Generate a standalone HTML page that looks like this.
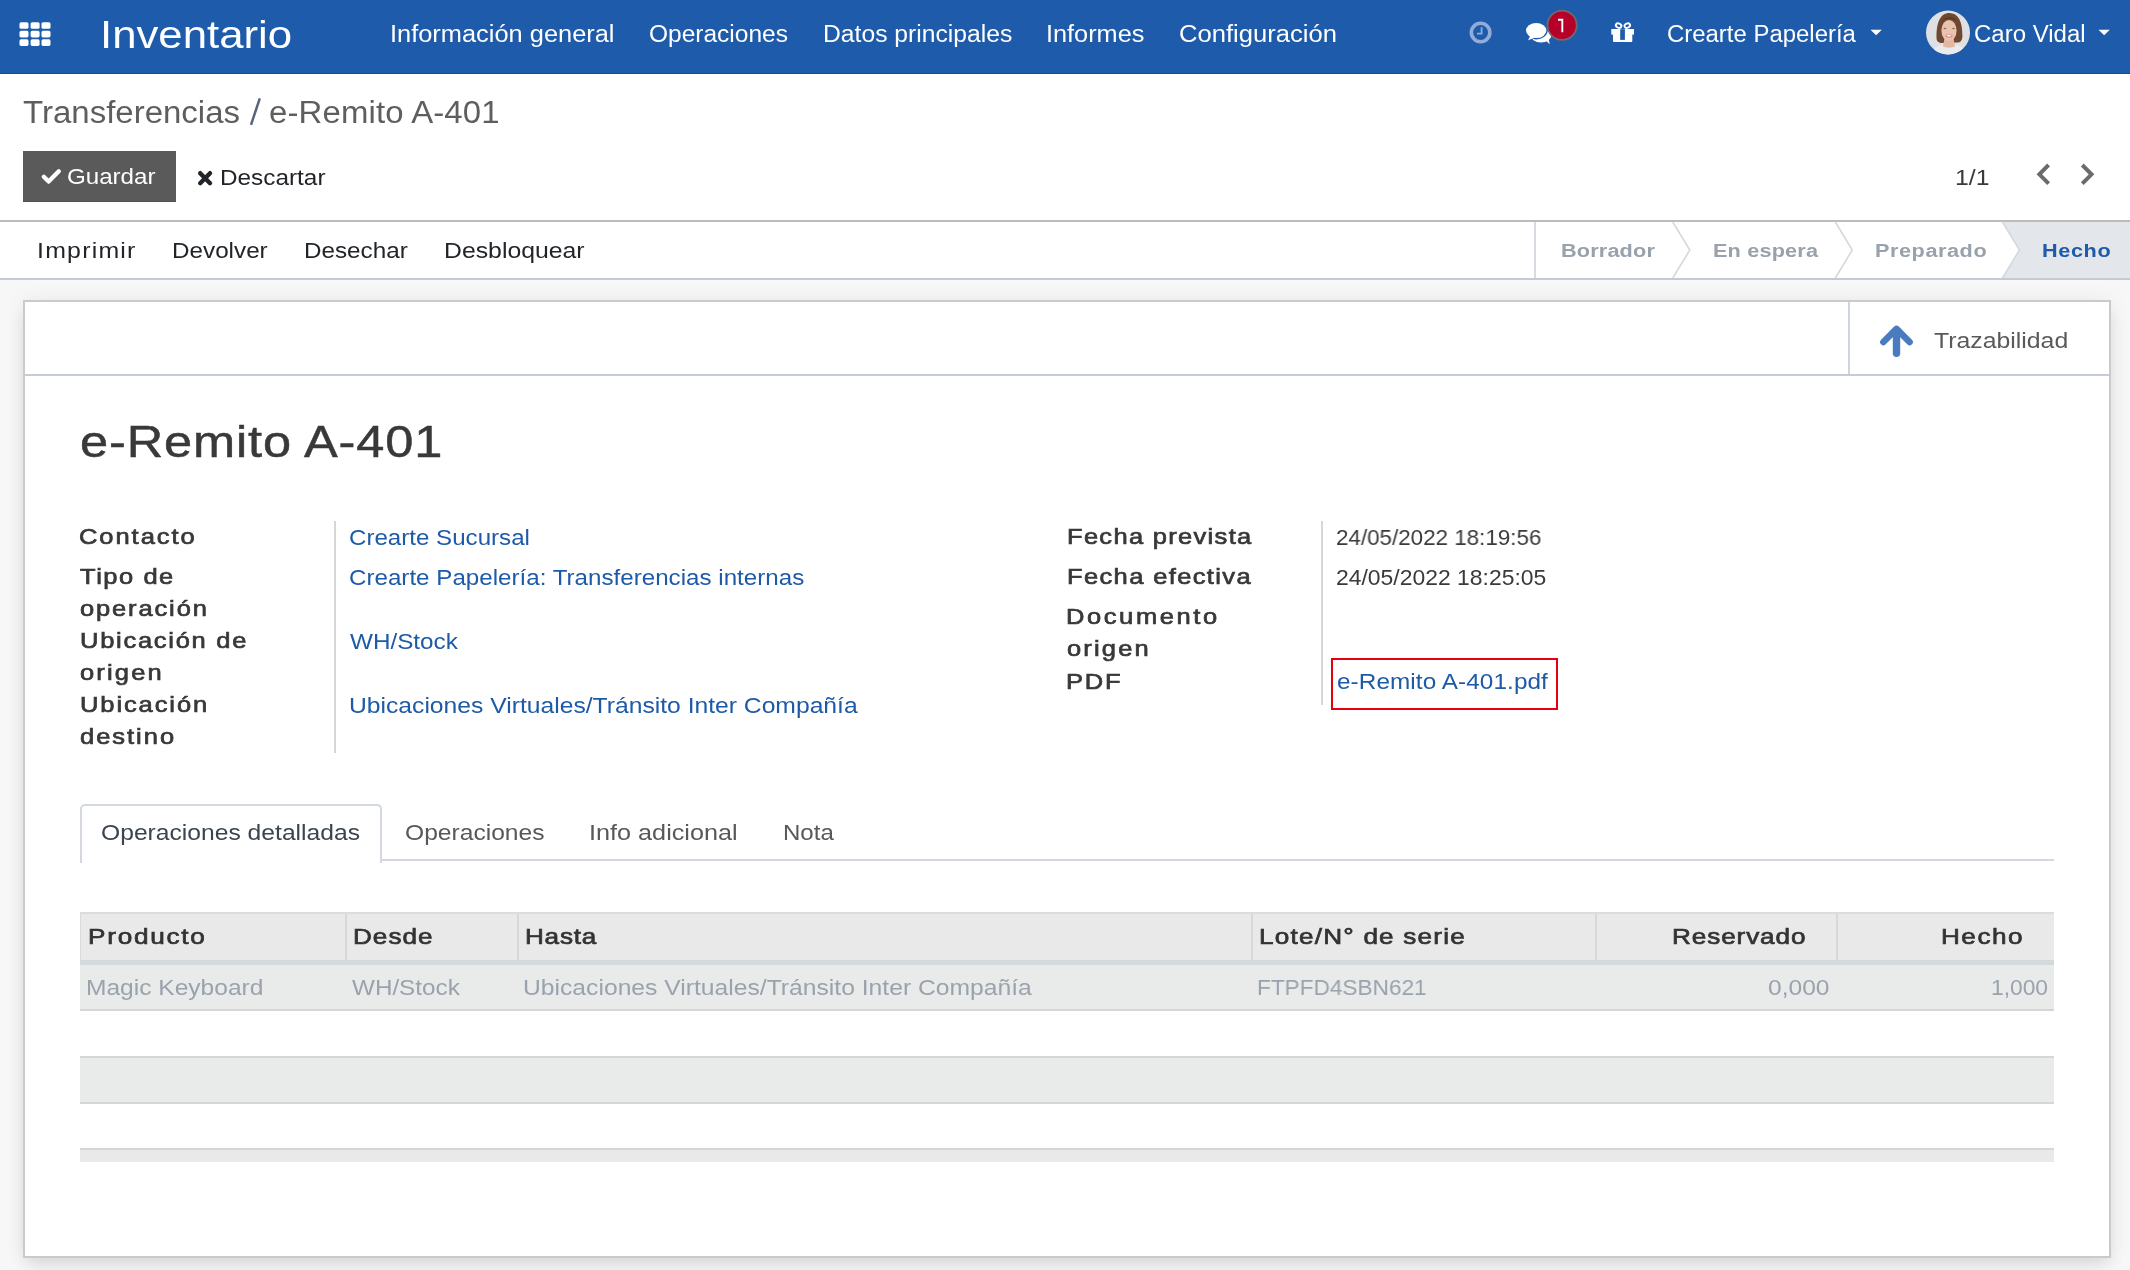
<!DOCTYPE html>
<html><head><meta charset="utf-8"><title>e-Remito A-401</title>
<style>
html,body{margin:0;padding:0;width:2130px;height:1270px;overflow:hidden;background:#f7f7f7;font-family:"Liberation Sans",sans-serif;}
.t{position:absolute;white-space:nowrap;line-height:1;will-change:transform;transform-origin:0 0;font-family:"Liberation Sans",sans-serif;}
.r{position:absolute;}
svg{position:absolute;overflow:visible;}

</style></head><body>
<!-- navbar -->
<div class="r" style="left:0;top:0;width:2130px;height:73px;background:#1e5cab;border-bottom:1px solid #0f4c9e"></div>
<!-- app grid icon -->
<svg style="left:0;top:0" width="80" height="74">
 <g fill="#fff">
  <rect x="19.5" y="22.2" width="9" height="6.6" rx="1.6"/><rect x="30.6" y="22.2" width="9" height="6.6" rx="1.6"/><rect x="41.5" y="22.2" width="9" height="6.6" rx="1.6"/>
  <rect x="19.5" y="30.8" width="9" height="6.6" rx="1.6"/><rect x="30.6" y="30.8" width="9" height="6.6" rx="1.6"/><rect x="41.5" y="30.8" width="9" height="6.6" rx="1.6"/>
  <rect x="19.5" y="39.3" width="9" height="6.6" rx="1.6"/><rect x="30.6" y="39.3" width="9" height="6.6" rx="1.6"/><rect x="41.5" y="39.3" width="9" height="6.6" rx="1.6"/>
 </g>
</svg>
<!-- clock -->
<svg style="left:1460px;top:12px" width="42" height="42">
 <circle cx="20.6" cy="20.5" r="9.25" fill="none" stroke="#91acd6" stroke-width="3.6"/>
 <path d="M21.6 15.3 V21.6 H17" fill="none" stroke="#91acd6" stroke-width="1.8"/>
</svg>
<!-- chat -->
<svg style="left:1515px;top:5px" width="45" height="45">
 <g fill="#fff">
  <ellipse cx="26" cy="31" rx="10.2" ry="6.4"/>
  <path d="M30 35 L34.8 39.2 L33.5 33.5 Z"/>
 </g>
 <ellipse cx="21.2" cy="25.6" rx="11.5" ry="8.8" fill="#1e5cab"/>
 <g fill="#fff">
  <ellipse cx="21.2" cy="25.6" rx="10.2" ry="7.5"/>
  <path d="M15.5 30.5 L13 35.3 L21 32.3 Z"/>
 </g>
</svg>
<!-- badge -->
<svg style="left:1540px;top:4px" width="46" height="44">
 <circle cx="22.1" cy="21.2" r="14.6" fill="#b6002a" stroke="#6f6a6a" stroke-width="1.8"/>
 <path d="M18 15.7 H22.3 V28.2" fill="none" stroke="#fff" stroke-width="1.9"/>
</svg>
<!-- gift -->
<svg style="left:1600px;top:12px" width="45" height="40">
 <g fill="none" stroke="#fff" stroke-width="1.9">
  <ellipse cx="18.6" cy="13.6" rx="2.9" ry="2.1" transform="rotate(25 18.6 13.6)"/>
  <ellipse cx="27.3" cy="13.6" rx="2.9" ry="2.1" transform="rotate(-25 27.3 13.6)"/>
 </g>
 <rect x="11.3" y="17" width="22.7" height="5.6" fill="#fff"/>
 <rect x="13" y="22" width="19.3" height="7.9" rx="1" fill="#fff"/>
 <rect x="20.2" y="17.2" width="4.7" height="10.7" fill="#1e5cab"/>
</svg>
<!-- carets -->
<svg style="left:1866px;top:26px" width="20" height="12"><path d="M4.5 3.8 H15.8 L10.15 9.3 Z" fill="#fff"/></svg>
<svg style="left:2094px;top:26px" width="20" height="12"><path d="M4.5 3.8 H15.8 L10.15 9.3 Z" fill="#fff"/></svg>
<!-- avatar -->
<svg style="left:1924px;top:9px" width="48" height="48">
 <defs><clipPath id="av"><circle cx="24" cy="23.5" r="22"/></clipPath></defs>
 <circle cx="24" cy="23.5" r="22" fill="#dfe0e4"/>
 <g clip-path="url(#av)">
  <path d="M3 50 C6 41 13 37 19 35.5 C22 38 28 38 31 35.5 C37 37 44 41 47 50 Z" fill="#ebebee"/>
  <path d="M12.6 30 C12 14 16 4 25.5 4 C34 4 38.8 12 38.4 28 C38 32 36 33.7 33 33.5 L17 34 C14 33.5 12.8 32 12.6 30 Z" fill="#704832"/>
  <path d="M20.5 29 L29.5 29 L31 37.5 C28 39 22 39 19 37.5 Z" fill="#e4b8a0"/>
  <ellipse cx="25" cy="21.5" rx="7.6" ry="10.6" fill="#e9c3ad"/>
  <path d="M17.5 13 C20 9 27 8.5 33 12 C30 7 20 7 17.5 13 Z" fill="#5c3824"/>
  <ellipse cx="21" cy="19.5" rx="1.4" ry="0.8" fill="#8a6a62"/>
  <ellipse cx="29.5" cy="19.5" rx="1.4" ry="0.8" fill="#8a6a62"/>
  <ellipse cx="25" cy="27" rx="3.6" ry="1.7" fill="#d98a90"/>
  <ellipse cx="25" cy="26.7" rx="2.3" ry="0.8" fill="#fff"/>
 </g>
</svg>

<!-- control panel -->
<div class="r" style="left:0;top:74px;width:2130px;height:146px;background:#fff"></div>
<div class="r" style="left:0;top:220px;width:2130px;height:2px;background:#bcbcbc"></div>
<div class="r" style="left:23px;top:151px;width:153px;height:51px;background:#5a5a5a;box-shadow:inset 0 -1px 0 #505050"></div>
<svg style="left:0;top:0" width="300" height="140"><path d="M251 124.8 L259.8 98.4" stroke="#56657a" stroke-width="2.5" fill="none"/></svg>
<!-- check -->
<svg style="left:39px;top:163px" width="26" height="24"><path d="M4.8 13.8 L9.6 18.6 L19.8 8.2" fill="none" stroke="#fff" stroke-width="4.3" stroke-linecap="round" stroke-linejoin="round"/></svg>
<!-- X -->
<svg style="left:194px;top:167px" width="22" height="22"><path d="M6.2 6.2 L16 16.2 M16 6.2 L6.2 16.2" fill="none" stroke="#212529" stroke-width="4.4" stroke-linecap="round"/></svg>
<!-- pager chevrons -->
<svg style="left:2030px;top:160px" width="26" height="28"><path d="M17.2 6.4 L9.4 14.3 L17.2 22.2" fill="none" stroke="#6b6b6b" stroke-width="4" stroke-linecap="square"/></svg>
<svg style="left:2075px;top:160px" width="26" height="28"><path d="M8.7 6.4 L16.5 14.3 L8.7 22.2" fill="none" stroke="#6b6b6b" stroke-width="4" stroke-linecap="square"/></svg>

<!-- status bar -->
<div class="r" style="left:0;top:222px;width:2130px;height:56px;background:#fff"></div>
<div class="r" style="left:0;top:278px;width:2130px;height:2px;background:#c3cad3"></div>
<div class="r" style="left:1534px;top:222px;width:2px;height:56px;background:#d5dbe1"></div>
<svg style="left:0;top:0" width="2130" height="290">
 <path d="M2002.5 222 L2019.5 250 L2002.5 278 L2130 278 L2130 222 Z" fill="#e3e7eb"/>
 <g fill="none" stroke="#d3d9df" stroke-width="1.6">
  <path d="M1672.8 222 L1689.8 250 L1672.8 278"/>
  <path d="M1835.3 222 L1852.3 250 L1835.3 278"/>
  <path d="M2002.5 222 L2019.5 250 L2002.5 278"/>
 </g>
</svg>

<!-- sheet -->
<div class="r" style="left:23px;top:300px;width:2084px;height:954px;background:#fff;border:2px solid #ccc9cb;box-shadow:0 8px 16px -3px rgba(0,0,0,0.12),0 0 22px rgba(0,0,0,0.05)"></div>
<div class="r" style="left:25px;top:374px;width:2084px;height:2px;background:#c5ccd5"></div>
<div class="r" style="left:1848px;top:302px;width:1.5px;height:72px;background:#cfd5dc"></div>
<!-- arrow up -->
<svg style="left:1870px;top:318px" width="50" height="46">
 <path d="M26.5 13 V35.2" fill="none" stroke="#4a7bbf" stroke-width="7.4" stroke-linecap="round"/>
 <path d="M13.4 24 L26.5 10.9 L39.6 24" fill="none" stroke="#4a7bbf" stroke-width="6.6" stroke-linecap="round" stroke-linejoin="round"/>
</svg>
<!-- group separators -->
<div class="r" style="left:334px;top:521px;width:2px;height:232px;background:#d6d6d6"></div>
<div class="r" style="left:1321px;top:521px;width:2px;height:184px;background:#d6d6d6"></div>
<!-- red highlight box -->
<div class="r" style="left:1331px;top:658px;width:223px;height:48px;border:2px solid #e3000f"></div>

<!-- tabs -->
<div class="r" style="left:80px;top:859px;width:1974px;height:2px;background:#d3d9df"></div>
<div class="r" style="left:80px;top:804px;width:298px;height:57px;background:#fff;border:2px solid #d3d9df;border-bottom:none;border-radius:5px 5px 0 0"></div>

<!-- table -->
<div class="r" style="left:80px;top:912px;width:1974px;height:2px;background:#d9dde1"></div>
<div class="r" style="left:80px;top:914px;width:1974px;height:46px;background:#e9e9e9"></div>
<div class="r" style="left:80px;top:914px;width:1px;height:47px;background:#d9d9d9"></div>
<div class="r" style="left:345px;top:914px;width:2px;height:47px;background:#d8d8d8"></div>
<div class="r" style="left:517px;top:914px;width:2px;height:47px;background:#d8d8d8"></div>
<div class="r" style="left:1251px;top:914px;width:2px;height:47px;background:#d8d8d8"></div>
<div class="r" style="left:1595px;top:914px;width:2px;height:47px;background:#d8d8d8"></div>
<div class="r" style="left:1836px;top:914px;width:2px;height:47px;background:#d8d8d8"></div>
<div class="r" style="left:80px;top:960px;width:1974px;height:5px;background:#d4d9de"></div>
<div class="r" style="left:80px;top:965px;width:1974px;height:44px;background:#e9ebeb"></div>
<div class="r" style="left:80px;top:1009px;width:1974px;height:2px;background:#d3d7dc"></div>
<div class="r" style="left:80px;top:1056px;width:1974px;height:2px;background:#d3d7dc"></div>
<div class="r" style="left:80px;top:1058px;width:1974px;height:44px;background:#e9ebeb"></div>
<div class="r" style="left:80px;top:1102px;width:1974px;height:2px;background:#d3d7dc"></div>
<div class="r" style="left:80px;top:1148px;width:1974px;height:2px;background:#d3d7dc"></div>
<div class="r" style="left:80px;top:1150px;width:1974px;height:12px;background:#e9e9e9"></div>

<div class="t" style="left:100.37px;top:15.29px;font-size:39.42px;font-weight:400;color:#ffffff;letter-spacing:-0.001px;transform:scaleX(1.1103)">Inventario</div>
<div class="t" style="left:389.86px;top:22.29px;font-size:23.78px;font-weight:400;color:#ffffff;letter-spacing:-0.001px;transform:scaleX(1.0688)">Información general</div>
<div class="t" style="left:648.67px;top:22.29px;font-size:23.78px;font-weight:400;color:#ffffff;letter-spacing:-0.000px;transform:scaleX(1.0309)">Operaciones</div>
<div class="t" style="left:822.76px;top:22.29px;font-size:23.78px;font-weight:400;color:#ffffff;letter-spacing:-0.000px;transform:scaleX(1.0385)">Datos principales</div>
<div class="t" style="left:1046.07px;top:22.29px;font-size:23.78px;font-weight:400;color:#ffffff;letter-spacing:-0.000px;transform:scaleX(1.0644)">Informes</div>
<div class="t" style="left:1179.12px;top:22.29px;font-size:23.78px;font-weight:400;color:#ffffff;letter-spacing:-0.001px;transform:scaleX(1.0767)">Configuración</div>
<div class="t" style="left:1666.69px;top:22.29px;font-size:23.78px;font-weight:400;color:#ffffff;letter-spacing:-0.001px;transform:scaleX(1.0071)">Crearte Papelería</div>
<div class="t" style="left:1974.49px;top:22.29px;font-size:23.78px;font-weight:400;color:#ffffff;letter-spacing:-0.000px;transform:scaleX(1.0097)">Caro Vidal</div>
<div class="t" style="left:23.20px;top:97.40px;font-size:31.88px;font-weight:400;color:#5e5e5e;letter-spacing:-0.001px;transform:scaleX(1.0355)">Transferencias</div>
<div class="t" style="left:269.47px;top:97.40px;font-size:31.88px;font-weight:400;color:#5e5e5e;letter-spacing:0.135px;transform:scaleX(1.0330)">e-Remito A-401</div>
<div class="t" style="left:66.92px;top:165.78px;font-size:22.38px;font-weight:400;color:#ffffff;letter-spacing:-0.002px;transform:scaleX(1.0780)">Guardar</div>
<div class="t" style="left:219.91px;top:166.58px;font-size:22.38px;font-weight:400;color:#212529;letter-spacing:-0.000px;transform:scaleX(1.0877)">Descartar</div>
<div class="t" style="left:1955.19px;top:166.88px;font-size:22.38px;font-weight:400;color:#3a3a3a;letter-spacing:-0.003px;transform:scaleX(1.1092)">1/1</div>
<div class="t" style="left:36.92px;top:240.45px;font-size:21.82px;font-weight:400;color:#212529;letter-spacing:1.079px;transform:scaleX(1.1400)">Imprimir</div>
<div class="t" style="left:171.89px;top:240.45px;font-size:21.82px;font-weight:400;color:#212529;letter-spacing:-0.001px;transform:scaleX(1.1120)">Devolver</div>
<div class="t" style="left:303.89px;top:240.45px;font-size:21.82px;font-weight:400;color:#212529;letter-spacing:-0.001px;transform:scaleX(1.1109)">Desechar</div>
<div class="t" style="left:443.66px;top:240.45px;font-size:21.82px;font-weight:400;color:#212529;letter-spacing:-0.000px;transform:scaleX(1.1370)">Desbloquear</div>
<div class="t" style="left:1561.46px;top:241.33px;font-size:19.02px;font-weight:700;color:#98a1ac;letter-spacing:0.139px;transform:scaleX(1.1400)">Borrador</div>
<div class="t" style="left:1712.56px;top:241.33px;font-size:19.02px;font-weight:700;color:#98a1ac;letter-spacing:0.145px;transform:scaleX(1.1400)">En espera</div>
<div class="t" style="left:1874.66px;top:241.33px;font-size:19.02px;font-weight:700;color:#98a1ac;letter-spacing:0.484px;transform:scaleX(1.1400)">Preparado</div>
<div class="t" style="left:2041.56px;top:241.33px;font-size:19.02px;font-weight:700;color:#1f5bab;letter-spacing:0.543px;transform:scaleX(1.1400)">Hecho</div>
<div class="t" style="left:1934.00px;top:329.98px;font-size:22.38px;font-weight:400;color:#5a5a5a;letter-spacing:-0.001px;transform:scaleX(1.1086)">Trazabilidad</div>
<div class="t" style="left:79.56px;top:420.00px;font-size:44.35px;font-weight:400;color:#393939;letter-spacing:0.749px;transform:scaleX(1.1400);-webkit-text-stroke:0.5px #393939">e-Remito A-401</div>
<div class="t" style="left:79.46px;top:526.28px;font-size:22.38px;font-weight:400;color:#383838;letter-spacing:1.699px;transform:scaleX(1.1400);-webkit-text-stroke:0.7px #383838">Contacto</div>
<div class="t" style="left:80.00px;top:565.98px;font-size:22.38px;font-weight:400;color:#383838;letter-spacing:1.341px;transform:scaleX(1.1400);-webkit-text-stroke:0.7px #383838">Tipo de</div>
<div class="t" style="left:80.00px;top:597.98px;font-size:22.38px;font-weight:400;color:#383838;letter-spacing:1.625px;transform:scaleX(1.1400);-webkit-text-stroke:0.7px #383838">operación</div>
<div class="t" style="left:80.06px;top:630.08px;font-size:22.38px;font-weight:400;color:#383838;letter-spacing:1.513px;transform:scaleX(1.1400);-webkit-text-stroke:0.7px #383838">Ubicación de</div>
<div class="t" style="left:80.30px;top:662.28px;font-size:22.38px;font-weight:400;color:#383838;letter-spacing:1.899px;transform:scaleX(1.1400);-webkit-text-stroke:0.7px #383838">origen</div>
<div class="t" style="left:80.06px;top:693.98px;font-size:22.38px;font-weight:400;color:#383838;letter-spacing:1.664px;transform:scaleX(1.1400);-webkit-text-stroke:0.7px #383838">Ubicación</div>
<div class="t" style="left:80.30px;top:726.28px;font-size:22.38px;font-weight:400;color:#383838;letter-spacing:1.731px;transform:scaleX(1.1400);-webkit-text-stroke:0.7px #383838">destino</div>
<div class="t" style="left:1067.16px;top:526.28px;font-size:22.38px;font-weight:400;color:#383838;letter-spacing:1.141px;transform:scaleX(1.1400);-webkit-text-stroke:0.7px #383838">Fecha prevista</div>
<div class="t" style="left:1067.16px;top:566.48px;font-size:22.38px;font-weight:400;color:#383838;letter-spacing:1.195px;transform:scaleX(1.1400);-webkit-text-stroke:0.7px #383838">Fecha efectiva</div>
<div class="t" style="left:1066.26px;top:606.18px;font-size:22.38px;font-weight:400;color:#383838;letter-spacing:2.270px;transform:scaleX(1.1400);-webkit-text-stroke:0.7px #383838">Documento</div>
<div class="t" style="left:1067.40px;top:637.78px;font-size:22.38px;font-weight:400;color:#383838;letter-spacing:1.899px;transform:scaleX(1.1400);-webkit-text-stroke:0.7px #383838">origen</div>
<div class="t" style="left:1066.26px;top:670.68px;font-size:22.38px;font-weight:400;color:#383838;letter-spacing:1.525px;transform:scaleX(1.1400);-webkit-text-stroke:0.7px #383838">PDF</div>
<div class="t" style="left:348.94px;top:526.34px;font-size:22.66px;font-weight:400;color:#1d5aa8;letter-spacing:-0.001px;transform:scaleX(1.0646)">Crearte Sucursal</div>
<div class="t" style="left:348.93px;top:565.94px;font-size:22.66px;font-weight:400;color:#1d5aa8;letter-spacing:0.010px;transform:scaleX(1.0653)">Crearte Papelería: Transferencias internas</div>
<div class="t" style="left:350.00px;top:629.84px;font-size:22.66px;font-weight:400;color:#1d5aa8;letter-spacing:0.000px;transform:scaleX(1.0713)">WH/Stock</div>
<div class="t" style="left:348.91px;top:694.14px;font-size:22.66px;font-weight:400;color:#1d5aa8;letter-spacing:-0.000px;transform:scaleX(1.0887)">Ubicaciones Virtuales/Tránsito Inter Compañía</div>
<div class="t" style="left:1337.00px;top:670.24px;font-size:22.66px;font-weight:400;color:#1d5aa8;letter-spacing:0.073px;transform:scaleX(1.0733)">e-Remito A-401.pdf</div>
<div class="t" style="left:1335.81px;top:526.24px;font-size:22.66px;font-weight:400;color:#3a3a3a;letter-spacing:-0.001px;transform:scaleX(0.9880)">24/05/2022 18:19:56</div>
<div class="t" style="left:1335.79px;top:566.34px;font-size:22.66px;font-weight:400;color:#3a3a3a;letter-spacing:-0.001px;transform:scaleX(1.0117)">24/05/2022 18:25:05</div>
<div class="t" style="left:101.20px;top:822.18px;font-size:22.38px;font-weight:400;color:#3b4450;letter-spacing:-0.000px;transform:scaleX(1.1017)">Operaciones detalladas</div>
<div class="t" style="left:405.10px;top:821.78px;font-size:22.38px;font-weight:400;color:#585858;letter-spacing:-0.001px;transform:scaleX(1.0996)">Operaciones</div>
<div class="t" style="left:588.65px;top:821.78px;font-size:22.38px;font-weight:400;color:#585858;letter-spacing:-0.000px;transform:scaleX(1.1273)">Info adicional</div>
<div class="t" style="left:783.13px;top:821.78px;font-size:22.38px;font-weight:400;color:#585858;letter-spacing:-0.001px;transform:scaleX(1.0744)">Nota</div>
<div class="t" style="left:88.26px;top:924.60px;font-size:22.94px;font-weight:400;color:#333333;letter-spacing:1.535px;transform:scaleX(1.1400);-webkit-text-stroke:0.7px #333333">Producto</div>
<div class="t" style="left:352.86px;top:924.60px;font-size:22.94px;font-weight:400;color:#333333;letter-spacing:0.856px;transform:scaleX(1.1400);-webkit-text-stroke:0.7px #333333">Desde</div>
<div class="t" style="left:525.16px;top:924.60px;font-size:22.94px;font-weight:400;color:#333333;letter-spacing:0.645px;transform:scaleX(1.1400);-webkit-text-stroke:0.7px #333333">Hasta</div>
<div class="t" style="left:1258.86px;top:924.60px;font-size:22.94px;font-weight:400;color:#333333;letter-spacing:1.054px;transform:scaleX(1.1400);-webkit-text-stroke:0.7px #333333">Lote/N° de serie</div>
<div class="t" style="left:1671.86px;top:924.60px;font-size:22.94px;font-weight:400;color:#333333;letter-spacing:0.772px;transform:scaleX(1.1400);-webkit-text-stroke:0.7px #333333">Reservado</div>
<div class="t" style="left:1941.26px;top:924.60px;font-size:22.94px;font-weight:400;color:#333333;letter-spacing:1.296px;transform:scaleX(1.1400);-webkit-text-stroke:0.7px #333333">Hecho</div>
<div class="t" style="left:85.72px;top:976.42px;font-size:22.8px;font-weight:400;color:#9aa2ac;letter-spacing:-0.000px;transform:scaleX(1.0769)">Magic Keyboard</div>
<div class="t" style="left:352.00px;top:976.42px;font-size:22.8px;font-weight:400;color:#9aa2ac;letter-spacing:-0.002px;transform:scaleX(1.0635)">WH/Stock</div>
<div class="t" style="left:523.12px;top:976.42px;font-size:22.8px;font-weight:400;color:#9aa2ac;letter-spacing:-0.000px;transform:scaleX(1.0824)">Ubicaciones Virtuales/Tránsito Inter Compañía</div>
<div class="t" style="left:1257.01px;top:976.42px;font-size:22.8px;font-weight:400;color:#9aa2ac;letter-spacing:-0.001px;transform:scaleX(0.9920)">FTPFD4SBN621</div>
<div class="t" style="left:1768.00px;top:976.42px;font-size:22.8px;font-weight:400;color:#9aa2ac;letter-spacing:-0.004px;transform:scaleX(1.0786)">0,000</div>
<div class="t" style="left:1991.01px;top:976.42px;font-size:22.8px;font-weight:400;color:#9aa2ac;letter-spacing:-0.004px;transform:scaleX(0.9933)">1,000</div>
</body></html>
